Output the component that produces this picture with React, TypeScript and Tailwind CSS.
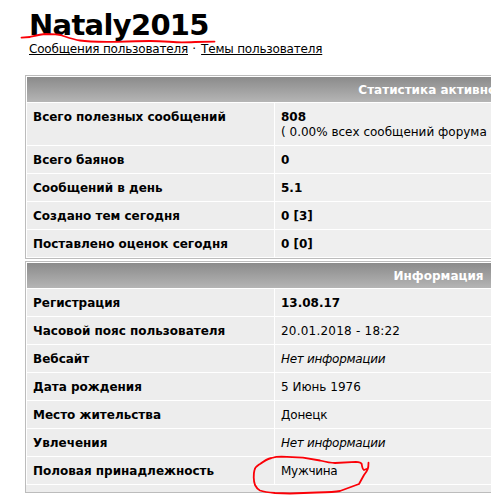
import type { ReactNode } from "react";

interface Row {
  label: string;
  value: ReactNode;
}

const noInfo = <i className="tracking-[-0.29px]">Нет информации</i>;

const statsRows: Row[] = [
  {
    label: "Всего полезных сообщений",
    value: (
      <>
        <b>808</b>
        <br />( 0.00% всех сообщений форума )
      </>
    ),
  },
  { label: "Всего баянов", value: <b>0</b> },
  { label: "Сообщений в день", value: <b>5.1</b> },
  { label: "Создано тем сегодня", value: <b>0 [3]</b> },
  { label: "Поставлено оценок сегодня", value: <b>0 [0]</b> },
];

const infoRows: Row[] = [
  { label: "Регистрация", value: <b>13.08.17</b> },
  {
    label: "Часовой пояс пользователя",
    value: <span className="tracking-[0.22px]">20.01.2018 - 18:22</span>,
  },
  { label: "Вебсайт", value: noInfo },
  { label: "Дата рождения", value: "5 Июнь 1976" },
  {
    label: "Место жительства",
    value: <span className="tracking-[-0.15px]">Донецк</span>,
  },
  { label: "Увлечения", value: noInfo },
  {
    label: "Половая принадлежность",
    value: <span className="tracking-[-0.28px]">Мужчина</span>,
  },
];

interface PanelProps {
  title: string;
  rows: Row[];
  footer?: boolean;
}

const Panel = ({ title, rows, footer }: PanelProps) => {
  return (
    <div className="w-[827px] border border-[#bcbcbc]">
      <div className="flex flex-col gap-px border border-white bg-white">
        <div className="flex h-[25px] items-center justify-center bg-linear-to-b from-[#8b8b8b] to-[#b5b5b5] pt-[2px] font-bold text-white">
          {title}
        </div>
        {rows.map((row) => (
          <div key={row.label} className="grid grid-cols-[247px_1fr] gap-px">
            <div className="bg-[#ededed] px-1.5 pt-[7px] pb-[5px] font-bold tracking-[-0.01px]">
              {row.label}
            </div>
            <div className="bg-[#efefef] px-1.5 pt-[7px] pb-[5px]">
              {row.value}
            </div>
          </div>
        ))}
      </div>
      {footer && <div className="h-[7px] bg-[#ededed]" />}
    </div>
  );
};

export default function App() {
  return (
    <div className="relative h-[495px] w-[491px] overflow-hidden bg-white pl-[25px] font-['DejaVu_Sans',sans-serif] text-[12px] leading-[15px] text-black">
      <header className="h-[75px] pt-[8px] pl-1">
        <h1 className="text-[29px] leading-[34px] font-bold tracking-[-0.7px]">
          Nataly2015
        </h1>
        <nav className="tracking-[-0.19px] whitespace-nowrap">
          <a className="underline decoration-1 underline-offset-1 [text-decoration-skip-ink:none]">
            Сообщения пользователя
          </a>
          <span className="tracking-[0.55px]">{" · "}</span>
          <a className="underline decoration-1 underline-offset-1 [text-decoration-skip-ink:none]">
            Темы пользователя
          </a>
        </nav>
      </header>

      <main className="flex flex-col gap-[2px]">
        <Panel title="Статистика активности" rows={statsRows} />
        <Panel title="Информация" rows={infoRows} footer />
      </main>

      {/* red pen marks */}
      <svg
        className="pointer-events-none absolute top-0 left-0"
        width="491"
        height="495"
        fill="none"
        stroke="#fb0007"
        strokeWidth="1.8"
        strokeLinecap="round"
        strokeLinejoin="round"
      >
        <path d="M21.5 37.7 L30 37 C36 35.5 40 34.3 46 34 C52 34 57 34 62 35.5 C68 37.5 73 39.5 80 40.5 C90 42.2 98 42 117 41.8 C130 41.3 140 41 150 41 C165 41 172 42.3 182 42.3 C192 42.3 200 41.6 214.5 41.6" />
        <path d="M368.5 462.7 C368.5 468 368 470 364 475 L359 484 L340 491 C335 492 325 492.3 317 492.5 L290 493.5 L275 493 C268 492.5 264 492 260 490.5 C257 489 256 487 255 485 C253.5 481 253.3 474 254.5 470 C255 467 257 466 260 464 C264 461 267 459 271.5 458 C276 456.7 278 456.7 281.5 456.7 L303 457.7 L320 460.5 C327 462.3 330 463 335 463 L356 461.8 C359 461.8 361 462.5 361.7 464 C362 467 362.5 469 364 470 L366.5 469" />
      </svg>
    </div>
  );
}
